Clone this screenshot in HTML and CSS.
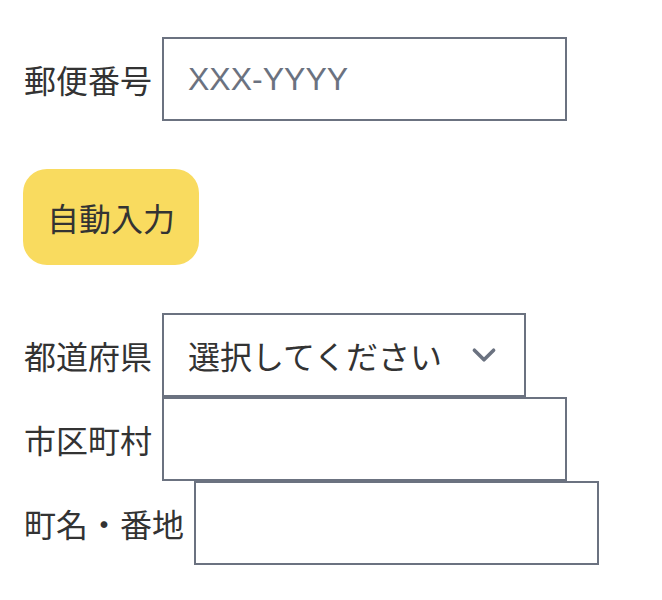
FILE: index.html
```html
<!DOCTYPE html>
<html lang="ja">
<head>
    <meta charset="UTF-8">
    <meta name="viewport" content="width=device-width, initial-scale=1.0">
    <title>住所入力</title>
    <link rel="stylesheet" href="styles.css">
</head>
<body>
    <form class="address-form">
        <div class="row">
            <label for="zip">郵便番号</label>
            <input type="text" id="zip" class="field" placeholder="XXX-YYYY">
        </div>

        <button type="button" class="auto-btn">自動入力</button>

        <div class="group">
            <div class="row">
                <label for="pref">都道府県</label>
                <div class="select">
                    <span class="select-text">選択してください</span>
                    <svg class="chevron" viewBox="0 0 20 20" fill="none">
                        <path d="M6 8l4 4 4-4" stroke="#6b7280" stroke-width="1.5" stroke-linecap="round" stroke-linejoin="round"/>
                    </svg>
                </div>
            </div>
            <div class="row">
                <label for="city">市区町村</label>
                <input type="text" id="city" class="field">
            </div>
            <div class="row">
                <label for="street">町名・番地</label>
                <input type="text" id="street" class="field">
            </div>
        </div>
    </form>
</body>
</html>
```

FILE: styles.css
```css
body {
    margin: 0;
    font-family: "Noto Sans CJK JP", "Liberation Sans", sans-serif;
    color: #333;
    background: #fff;
}

.address-form {
    padding: 37px 24px 0;
}

.row {
    display: flex;
    align-items: center;
    gap: 10px;
}

.row label {
    font-size: 32px;
    line-height: 48px;
}

.field {
    box-sizing: border-box;
    width: 405px;
    height: 84px;
    padding: 16px 24px;
    border: 2px solid #6b7280;
    border-radius: 0;
    font-family: "Liberation Sans", "Noto Sans CJK JP", sans-serif;
    font-size: 32px;
    line-height: 48px;
    color: #333;
    outline: none;
}

.field::placeholder {
    color: #6b7280;
}

.auto-btn {
    display: block;
    margin: 48px 0 48px -1px;
    padding: 24px 24px;
    border: none;
    border-radius: 24px;
    background: #f9db5f;
    color: #333;
    font-family: inherit;
    font-size: 32px;
    line-height: 48px;
}

.select {
    box-sizing: border-box;
    display: flex;
    align-items: center;
    width: 364px;
    height: 84px;
    padding: 0 16px 0 24px;
    border: 2px solid #6b7280;
    font-size: 32px;
}

.select-text {
    flex: 1;
}

.chevron {
    width: 48px;
    height: 48px;
}
```
